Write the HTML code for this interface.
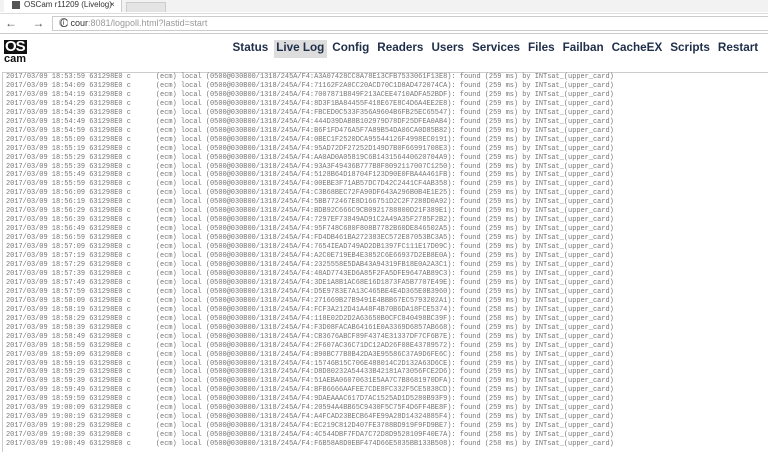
<!DOCTYPE html>
<html><head><meta charset="utf-8"><style>
*{margin:0;padding:0;box-sizing:border-box}
body{width:768px;height:446px;overflow:hidden;background:#fff;font-family:"Liberation Sans",Arial,sans-serif;position:relative}
.tabbar{position:absolute;left:0;top:0;width:768px;height:12px;background:#f2f2f2}
.tab{position:absolute;left:4px;top:0;width:118px;height:12px;background:#fff;border-right:1px solid #ccc;font-size:8px;color:#333;line-height:10px;padding-left:20px}
.tab i{position:absolute;left:8px;top:1px;width:8px;height:8px;background:#555}
.tab b{position:absolute;left:106px;top:0;font-weight:normal;font-size:8px}
.tab2{position:absolute;left:126px;top:2px;width:40px;height:10px;background:#e4e4e4;border:1px solid #ccc;border-bottom:none}
.bar{position:absolute;left:0;top:13px;width:768px;height:21px;background:#fff;border-bottom:1px solid #ccc;border-top:1px solid #ddd}
.nav{position:absolute;left:5px;top:2px;font-size:12px;color:#555;letter-spacing:6px}
.url{position:absolute;left:52px;top:2px;width:716px;height:15px;border:1px solid #ccc;border-right:none;font-size:9px;line-height:13px;padding-left:6px;color:#333}
.url span{color:#999}
.logo{position:absolute;left:4px;top:40px;font-weight:bold;line-height:1}
.logo .a{display:block;background:#111;color:#fff;font-size:15px;width:23px;height:14px;line-height:14px;letter-spacing:-1px;padding-left:1px}
.logo .b{display:block;font-size:11px;color:#111;margin-top:0}
.menu{position:absolute;top:40px;left:230px;font-weight:bold;font-size:11.7px;color:#1f2f4a;white-space:nowrap}
.menu span{display:inline-block;padding:0 2.5px;margin-right:3px;height:18px;line-height:15px}
.menu .on{background:#ddd}
.log{position:absolute;left:2px;top:72px;width:766px;height:380px;border-top:1px solid #ccc;border-left:1px solid #ccc;padding:0 0 0 3px;font-family:"Liberation Mono",monospace;font-size:6.95px;line-height:8.95px;color:#777;white-space:pre}
</style></head><body>
<div class="tabbar"><div class="tab"><i></i>OSCam r11209 (Livelog)<b>×</b></div><div class="tab2"></div></div>
<div class="bar"><div class="nav">← → C</div><div class="url">ⓘ cour<span>:8081/logpoll.html?lastid=start</span></div></div>
<div class="logo"><span class="a">OS</span><span class="b">cam</span></div>
<div class="menu"><span>Status</span><span class="on">Live Log</span><span>Config</span><span>Readers</span><span>Users</span><span>Services</span><span>Files</span><span>Failban</span><span>CacheEX</span><span>Scripts</span><span>Restart</span></div>
<div class="log">2017/03/09 18:53:59 631298E0 c      (ecm) local (0500@030B00/1318/245A/F4:A3A07428CC8A78E13CFB7533061F13E8): found (259 ms) by INTsat_(upper_card)
2017/03/09 18:54:09 631298E0 c      (ecm) local (0500@030B00/1318/245A/F4:71162F2A0CC20ACD70C1D8AD472074CA): found (259 ms) by INTsat_(upper_card)
2017/03/09 18:54:19 631298E0 c      (ecm) local (0500@030B00/1318/245A/F4:7007871B849F213ACEE4710ADFA52BDF): found (259 ms) by INTsat_(upper_card)
2017/03/09 18:54:29 631298E0 c      (ecm) local (0500@030B00/1318/245A/F4:8D3F1BA84455F418E67E8C4D6A4EE2E8): found (259 ms) by INTsat_(upper_card)
2017/03/09 18:54:39 631298E0 c      (ecm) local (0500@030B00/1318/245A/F4:FBCED0C533F356A9604B6FB25EC65547): found (259 ms) by INTsat_(upper_card)
2017/03/09 18:54:49 631298E0 c      (ecm) local (0500@030B00/1318/245A/F4:444D39DAB8B102979D78DF25DFEA0AB4): found (259 ms) by INTsat_(upper_card)
2017/03/09 18:54:59 631298E0 c      (ecm) local (0500@030B00/1318/245A/F4:B6F1FD476A5F7A89B54DA06CA0D85B82): found (259 ms) by INTsat_(upper_card)
2017/03/09 18:55:09 631298E0 c      (ecm) local (0500@030B00/1318/245A/F4:0BEC1F2520DCA95544126F4998EC0191): found (259 ms) by INTsat_(upper_card)
2017/03/09 18:55:19 631298E0 c      (ecm) local (0500@030B00/1318/245A/F4:95AD72DF27252D149D7B0F66991708E3): found (259 ms) by INTsat_(upper_card)
2017/03/09 18:55:29 631298E0 c      (ecm) local (0500@030B00/1318/245A/F4:AA0AD0A05819C6B143156440620704A9): found (259 ms) by INTsat_(upper_card)
2017/03/09 18:55:39 631298E0 c      (ecm) local (0500@030B00/1318/245A/F4:93A3F49436B777B8F8092117007C1250): found (259 ms) by INTsat_(upper_card)
2017/03/09 18:55:49 631298E0 c      (ecm) local (0500@030B00/1318/245A/F4:5128B64D18704F123D90E0FBA4A461FB): found (259 ms) by INTsat_(upper_card)
2017/03/09 18:55:59 631298E0 c      (ecm) local (0500@030B00/1318/245A/F4:00EBE3F71AB57DC7D42C2441CF4AB358): found (259 ms) by INTsat_(upper_card)
2017/03/09 18:56:09 631298E0 c      (ecm) local (0500@030B00/1318/245A/F4:C3B68BEC72FA90DF643A296B0B4E1E25): found (259 ms) by INTsat_(upper_card)
2017/03/09 18:56:19 631298E0 c      (ecm) local (0500@030B00/1318/245A/F4:5BB772467E8D166751D2C2F7288D0A92): found (259 ms) by INTsat_(upper_card)
2017/03/09 18:56:29 631298E0 c      (ecm) local (0500@030B00/1318/245A/F4:BDB92C666C9CB0921788800D21F389E1): found (259 ms) by INTsat_(upper_card)
2017/03/09 18:56:39 631298E0 c      (ecm) local (0500@030B00/1318/245A/F4:7297EF73849AD91C2A49A35F2785F2B2): found (259 ms) by INTsat_(upper_card)
2017/03/09 18:56:49 631298E0 c      (ecm) local (0500@030B00/1318/245A/F4:95F748C680F808B7782B60DE846502A5): found (259 ms) by INTsat_(upper_card)
2017/03/09 18:56:59 631298E0 c      (ecm) local (0500@030B00/1318/245A/F4:FD4DB461BA272383EC572E87053BC3A5): found (259 ms) by INTsat_(upper_card)
2017/03/09 18:57:09 631298E0 c      (ecm) local (0500@030B00/1318/245A/F4:7654IEAD749AD2DB1397FC111E17D09C): found (259 ms) by INTsat_(upper_card)
2017/03/09 18:57:19 631298E0 c      (ecm) local (0500@030B00/1318/245A/F4:A2C0E719EB4E3852C6E66937D2EB8E0A): found (259 ms) by INTsat_(upper_card)
2017/03/09 18:57:29 631298E0 c      (ecm) local (0500@030B00/1318/245A/F4:2325558E5DAB43A94319FB18E0A2A3C1): found (259 ms) by INTsat_(upper_card)
2017/03/09 18:57:39 631298E0 c      (ecm) local (0500@030B00/1318/245A/F4:48AD7743ED6A85F2FA5DFE9647AB89C3): found (259 ms) by INTsat_(upper_card)
2017/03/09 18:57:49 631298E0 c      (ecm) local (0500@030B00/1318/245A/F4:3DE1A8B1AC68E16D1873FA5B7707E49E): found (259 ms) by INTsat_(upper_card)
2017/03/09 18:57:59 631298E0 c      (ecm) local (0500@030B00/1318/245A/F4:D5E9783E7A13C465BE4E4D365E0B3960): found (259 ms) by INTsat_(upper_card)
2017/03/09 18:58:09 631298E0 c      (ecm) local (0500@030B00/1318/245A/F4:271669B27B9491E4BBB67EC5793202A1): found (259 ms) by INTsat_(upper_card)
2017/03/09 18:58:19 631298E0 c      (ecm) local (0500@030B00/1318/245A/F4:FCF3A212D41A48F4B70B6DA18FCE5374): found (258 ms) by INTsat_(upper_card)
2017/03/09 18:58:29 631298E0 c      (ecm) local (0500@030B00/1318/245A/F4:118E02D2D2A63650B0CFC840498BC39F): found (258 ms) by INTsat_(upper_card)
2017/03/09 18:58:39 631298E0 c      (ecm) local (0500@030B00/1318/245A/F4:F3D08FACAB64161E0A3369D6857AB668): found (259 ms) by INTsat_(upper_card)
2017/03/09 18:58:49 631298E0 c      (ecm) local (0500@030B00/1318/245A/F4:CB3676ABCF89F4374E31337DF7CF6B7E): found (259 ms) by INTsat_(upper_card)
2017/03/09 18:58:59 631298E0 c      (ecm) local (0500@030B00/1318/245A/F4:2F607AC36C71DC12AD26F08E43789572): found (259 ms) by INTsat_(upper_card)
2017/03/09 18:59:09 631298E0 c      (ecm) local (0500@030B00/1318/245A/F4:B90BC77B8B42DA3E95586C37A9D6FE6C): found (258 ms) by INTsat_(upper_card)
2017/03/09 18:59:19 631298E0 c      (ecm) local (0500@030B00/1318/245A/F4:15746B15C706E488014C2D132A63D6CE): found (259 ms) by INTsat_(upper_card)
2017/03/09 18:59:29 631298E0 c      (ecm) local (0500@030B00/1318/245A/F4:D8D80232A54433B42181A73056FCE2D6): found (259 ms) by INTsat_(upper_card)
2017/03/09 18:59:39 631298E0 c      (ecm) local (0500@030B00/1318/245A/F4:51AEBA06070631E5AA7C7B8681970DFA): found (259 ms) by INTsat_(upper_card)
2017/03/09 18:59:49 631298E0 c      (ecm) local (0500@030B00/1318/245A/F4:BFB6666AAFEE7CDE8FC332F5CE5838CD): found (259 ms) by INTsat_(upper_card)
2017/03/09 18:59:59 631298E0 c      (ecm) local (0500@030B00/1318/245A/F4:9DAEAAAC617D7AC1525AD1D5280B93F9): found (259 ms) by INTsat_(upper_card)
2017/03/09 19:00:09 631298E0 c      (ecm) local (0500@030B00/1318/245A/F4:20594A4BB65C9430F5C75F4D6FF4BE8F): found (259 ms) by INTsat_(upper_card)
2017/03/09 19:00:19 631298E0 c      (ecm) local (0500@030B00/1318/245A/F4:A4FCAD23BECB64FE99A28D14324885F4): found (259 ms) by INTsat_(upper_card)
2017/03/09 19:00:29 631298E0 c      (ecm) local (0500@030B00/1318/245A/F4:EC219C812D407FE3788BD919F9FD9BE7): found (259 ms) by INTsat_(upper_card)
2017/03/09 19:00:39 631298E0 c      (ecm) local (0500@030B00/1318/245A/F4:4C544DBF7FDA7C72D8D9528109F40E7A): found (258 ms) by INTsat_(upper_card)
2017/03/09 19:00:49 631298E0 c      (ecm) local (0500@030B00/1318/245A/F4:F6B58A8D0EBF474D66E5835BB133B508): found (258 ms) by INTsat_(upper_card)</div>
</body></html>
